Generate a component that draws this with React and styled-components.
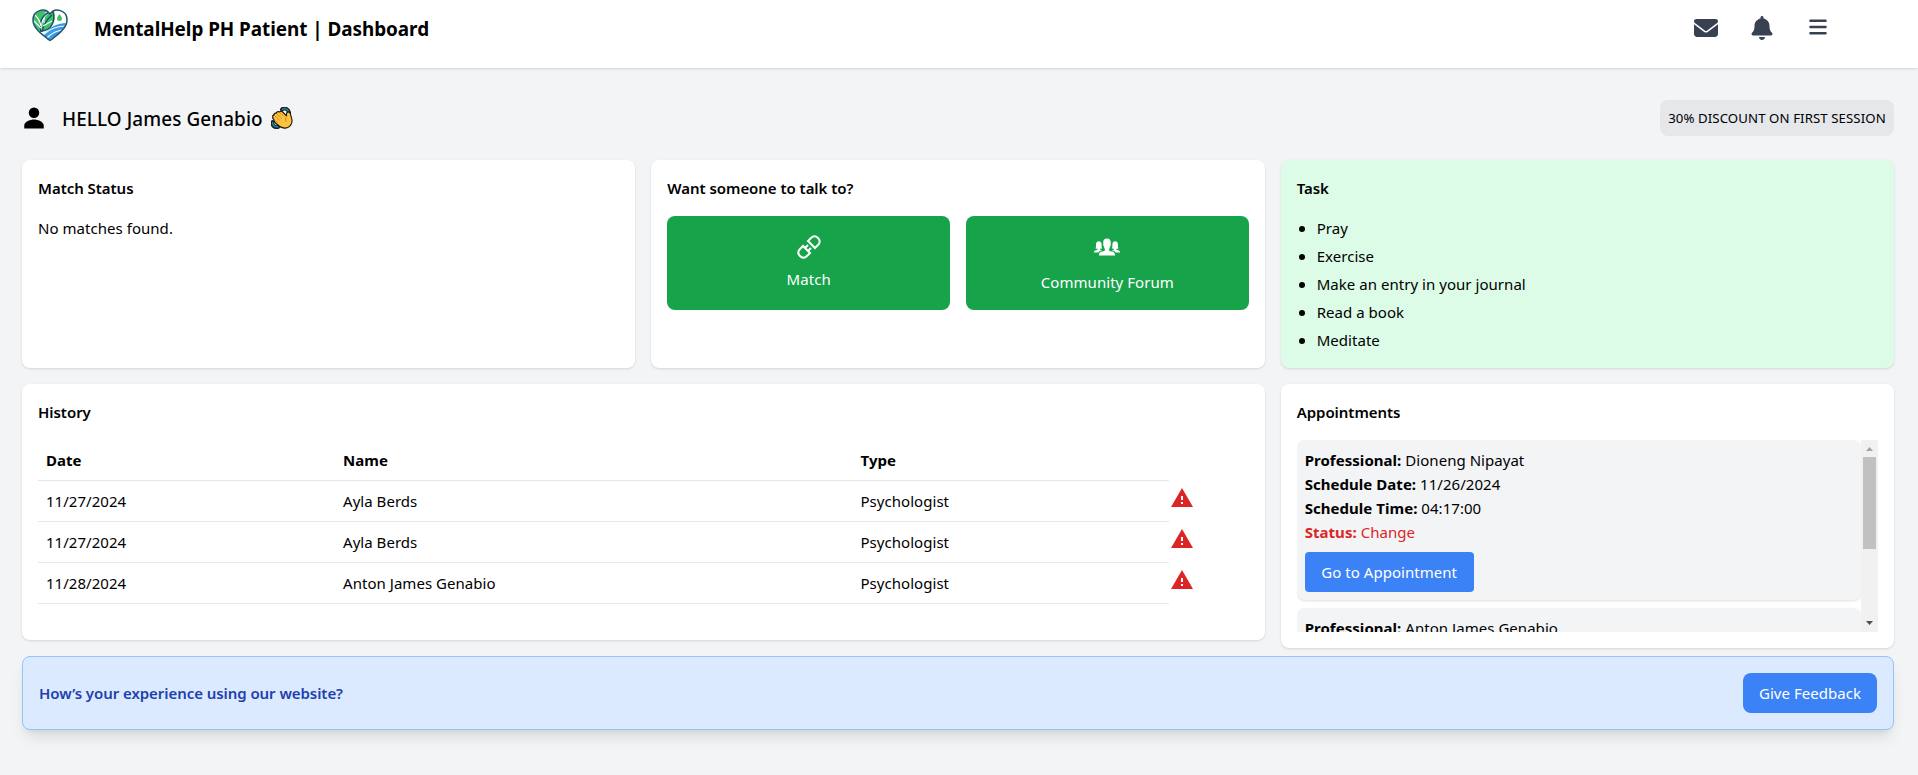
import React from "react";
import { GrConnect } from "react-icons/gr";
import { IoIosPeople } from "react-icons/io";
import { IoPersonSharp } from "react-icons/io5";
import { FaEnvelope, FaBell, FaBars } from "react-icons/fa6";
import { MdWarning } from "react-icons/md";
import styled, { createGlobalStyle } from "styled-components";

const GlobalStyle = createGlobalStyle`
  *, *::before, *::after { box-sizing: border-box; }
  body {
    margin: 0;
    background: #f3f4f6;
    color: #000;
    font-family: "Noto Sans", "Open Sans", sans-serif;
    font-size: 15px;
    line-height: 24px;
    letter-spacing: 0.04px;
  }
  h1, h2, p, ul { margin: 0; padding: 0; }
  svg { display: block; flex-shrink: 0; }
`;

const Page = styled.div`
  min-height: 775px;
  overflow: hidden;
`;

const Header = styled.header`
  display: flex;
  align-items: center;
  height: 68px;
  padding: 0 80px 12px 32px;
  background: #fff;
  box-shadow: 0 1px 3px rgba(0, 0, 0, 0.1), 0 1px 2px -1px rgba(0, 0, 0, 0.1);
`;

const Brand = styled.div`
  display: flex;
  align-items: center;
  gap: 26px;
  margin-right: auto;

  svg { margin-bottom: 5px; }
`;

const BrandTitle = styled.h1`
  padding-top: 2px;
  font-size: 18.9px;
  font-weight: 700;
  line-height: 28px;
  letter-spacing: -0.05px;
`;

const HeaderActions = styled.nav`
  display: flex;
  align-items: center;
  gap: 16px;
  color: #374151;
`;

const IconButton = styled.button`
  display: flex;
  align-items: center;
  justify-content: center;
  width: 40px;
  height: 40px;
  padding: 0 0 ${(p) => p.$lift || 0}px;
  border: 0;
  background: none;
  color: inherit;
`;

const Main = styled.main`
  padding: 32px 24px 0 22px;
`;

const Greeting = styled.div`
  display: flex;
  align-items: center;
  height: 36px;
  margin-bottom: 24px;
`;

const GreetingTitle = styled.h2`
  margin: 0 8px 0 16px;
  padding-top: 2px;
  font-size: 18.9px;
  font-weight: 500;
  line-height: 28px;
  letter-spacing: 0.1px;
`;

const Discount = styled.span`
  width: 234px;
  margin-left: auto;
  padding: 8px 0;
  border-radius: 8px;
  background: #e5e7eb;
  font-size: 13.2px;
  line-height: 20px;
  letter-spacing: 0.1px;
  text-align: center;
  white-space: nowrap;
`;

const Grid = styled.div`
  display: grid;
  grid-template-columns: repeat(3, minmax(0, 1fr));
  align-items: start;
  gap: 16px;
`;

const Card = styled.section`
  grid-column: span ${(p) => p.$span || 1};
  height: ${(p) => p.$height}px;
  padding: 16px;
  border-radius: 8px;
  background: ${(p) => p.$background || "#fff"};
  box-shadow: 0 1px 3px rgba(0, 0, 0, 0.1), 0 1px 2px -1px rgba(0, 0, 0, 0.1);
`;

const CardTitle = styled.h2`
  margin-bottom: 16px;
  font-size: 15px;
  font-weight: 600;
  line-height: 24px;
  letter-spacing: -0.04px;
`;

const TalkActions = styled.div`
  display: grid;
  grid-template-columns: 1fr 1fr;
  gap: 16px;
`;

const TalkButton = styled.button`
  display: flex;
  flex-direction: column;
  align-items: center;
  justify-content: center;
  gap: 8px;
  height: 94px;
  padding: 0;
  border: 0;
  border-radius: 8px;
  background: #16a34a;
  color: #fff;
  font: inherit;
  letter-spacing: inherit;
`;

const ConnectIcon = styled(GrConnect)`
  path { stroke: #fff; }
`;

const TaskList = styled.ul`
  display: flex;
  flex-direction: column;
  gap: 4px;
  list-style: none;
`;

const TaskItem = styled.li`
  display: flex;
  align-items: center;

  &::before {
    content: "";
    width: 6px;
    height: 6px;
    margin: 2px 12px 0 2px;
    border-radius: 50%;
    background: #000;
  }
`;

const HistoryTable = styled.table`
  width: 100%;
  table-layout: fixed;
  border-collapse: separate;
  border-spacing: 0;
`;

const Column = styled.col`
  width: ${(p) => p.$width}px;
`;

const Th = styled.th`
  height: 41px;
  padding: 8px;
  border-bottom: 1px solid #e5e7eb;
  font-weight: 700;
  text-align: left;
`;

const Td = styled.td`
  height: 41px;
  padding: 8px;
  border-bottom: 1px solid #e5e7eb;
`;

const AlertCell = styled.td`
  padding: 0 1px 7px;
  color: #dc2626;
  vertical-align: middle;
`;

const ScrollArea = styled.div`
  display: flex;
  height: 192px;
`;

const ScrollContent = styled.div`
  flex: 1;
  display: flex;
  flex-direction: column;
  gap: 8px;
  overflow: hidden;
`;

const Appointment = styled.article`
  flex-shrink: 0;
  height: 160px;
  padding: 8px;
  border-radius: 8px;
  background: #f3f4f6;
  box-shadow: 0 1px 3px rgba(0, 0, 0, 0.1), 0 1px 2px -1px rgba(0, 0, 0, 0.1);
`;

const Detail = styled.p`
  color: ${(p) => (p.$alert ? "#dc2626" : "inherit")};
`;

const Scrollbar = styled.div`
  display: flex;
  flex-direction: column;
  align-items: center;
  width: 17px;
  background: #f1f1f1;
`;

const ScrollArrow = styled.svg.attrs({ width: 17, height: 17, viewBox: "0 0 17 17" })`
  fill: ${(p) => p.$color};
`;

const ScrollThumb = styled.div`
  width: 13px;
  height: 92px;
  margin-bottom: auto;
  background: #c1c1c1;
`;

const BlueButton = styled.button`
  width: ${(p) => p.$width}px;
  height: 40px;
  margin-top: ${(p) => p.$top || 0}px;
  padding: 0;
  border: 0;
  border-radius: ${(p) => p.$radius}px;
  background: #3b82f6;
  color: #fff;
  font: inherit;
  letter-spacing: inherit;
`;

const FeedbackBanner = styled.aside`
  display: flex;
  align-items: center;
  justify-content: space-between;
  height: 74px;
  margin-top: 8px;
  padding: 0 16px;
  border: 1px solid #93c5fd;
  border-radius: 8px;
  background: #dbeafe;
  box-shadow: 0 10px 15px -3px rgba(0, 0, 0, 0.1), 0 4px 6px -4px rgba(0, 0, 0, 0.1);
`;

const FeedbackText = styled.p`
  color: #1e40af;
  font-weight: 600;
  letter-spacing: -0.06px;
`;

function Logo() {
  return (
    <svg width="36" height="33" viewBox="0 0 36 33" fill="none">
      <defs>
        <clipPath id="heart">
          <path d="M18 32C12 27 1 20 1 11 1 1 13-2 18 5 23-2 35 1 35 11 35 20 24 27 18 32Z" />
        </clipPath>
      </defs>
      <g clipPath="url(#heart)">
        <path d="M0 0H36V33H0Z" fill="#fff" />
        <path d="M0 0H17C11 5 7 12 9 23L0 17Z" fill="#3fc16c" />
        <path d="M10 22C9 11 14 4 22 2 24 12 20 20 10 22Z" fill="#3fc16c" />
        <path d="M11 27C17 17 26 14 36 14V24L18 33Z" fill="#3b9ae6" />
        <path d="M11 26C18 19 26 17 35 17M14 30C20 23 26 21 33 21M17 33C22 27 26 25 31 25" stroke="#e8f6ff" strokeWidth="1.2" />
        <path d="M9 23C7 13 10 6 18 3M10 22C19 21 24 13 21 2M10 23C11 17 14 11 20 6" stroke="#1c5362" strokeWidth="1.5" />
        <path d="M3 6C6 9 8 12 9 17M2 12L9 19M11 17L20 12M12 14V9" stroke="#fff" strokeWidth="1.1" />
      </g>
      <path d="M27.5 5C26 7 25 8.4 25 9.6A2.5 2.5 0 0 0 30 9.6C30 8.4 29 7 27.5 5Z" fill="#3fc16c" />
      <path d="M18 31.5C12 27 1 20 1 11 1 1 13-2 18 5 23-2 35 1 35 11 35 20 24 27 18 31.5Z" stroke="#20566c" strokeWidth="1.5" />
    </svg>
  );
}

function WavingHand() {
  return (
    <svg width="22" height="22" viewBox="0 0 22 22" fill="none">
      <path d="M11 2.500C12.500 .8 17 1 18 5.500M1.700 15C.5 18 3.500 20.800 7 20" stroke="#15232b" strokeWidth="4" strokeLinecap="round" />
      <path d="M11.500 2.300C13.500 1 16.500 1.800 17.500 4.500M1.600 15.500C1.500 18.500 4 20.300 7 19.800" stroke="#2d8ba0" strokeWidth="1.400" strokeLinecap="round" />
      <path
        d="M2 10.200C1 9 2 7.800 3.200 8.300 2.600 6.800 4 5.600 5.400 6.400 5.300 4.700 7.200 4 8.500 5.200 9.300 4 10.600 4 11.700 5L15.500 8.800C15.300 6.500 15.800 5 17.300 4.900 19 4.800 19.500 6.200 19.700 7.900 20 10 21.500 12 21 15 20.300 19 17 21.400 13.300 21.100 10 20.800 7.500 18.800 5 16.500 3.500 15 2.600 14 3.200 12.900L2 11.700C1.500 11.200 1.500 10.600 2 10.200Z"
        fill="#fdc23e" stroke="#17130a" strokeWidth="1.100" strokeLinejoin="round"
      />
      <path d="M3.500 8.500L8.500 13M5.600 6.600L10.500 11.200M8.700 5.400L12.500 9.200M3.500 13L6.500 15.500M15.700 9.500C14.200 11 14 12.800 15 14.500" stroke="#c9831f" strokeWidth=".8" strokeLinecap="round" />
    </svg>
  );
}

const tasks = ["Pray", "Exercise", "Make an entry in your journal", "Read a book", "Meditate"];

const history = [
  { date: "11/27/2024", name: "Ayla Berds", type: "Psychologist" },
  { date: "11/27/2024", name: "Ayla Berds", type: "Psychologist" },
  { date: "11/28/2024", name: "Anton James Genabio", type: "Psychologist" },
];

export default function App() {
  return (
    <Page>
      <GlobalStyle />
      <Header>
        <Brand>
          <Logo />
          <BrandTitle>MentalHelp PH Patient | Dashboard</BrandTitle>
        </Brand>
        <HeaderActions>
          <IconButton aria-label="Messages"><FaEnvelope size={24} /></IconButton>
          <IconButton aria-label="Notifications"><FaBell size={24} /></IconButton>
          <IconButton aria-label="Menu" $lift={2}><FaBars size={20} /></IconButton>
        </HeaderActions>
      </Header>

      <Main>
        <Greeting>
          <IoPersonSharp size={24} />
          <GreetingTitle>HELLO James Genabio</GreetingTitle>
          <WavingHand />
          <Discount>30% DISCOUNT ON FIRST SESSION</Discount>
        </Greeting>

        <Grid>
          <Card $height={208}>
            <CardTitle>Match Status</CardTitle>
            <p>No matches found.</p>
          </Card>

          <Card $height={208}>
            <CardTitle>Want someone to talk to?</CardTitle>
            <TalkActions>
              <TalkButton><ConnectIcon size={24} />Match</TalkButton>
              <TalkButton><IoIosPeople size={30} />Community Forum</TalkButton>
            </TalkActions>
          </Card>

          <Card $height={208} $background="#dcfce7">
            <CardTitle>Task</CardTitle>
            <TaskList>
              {tasks.map((task) => <TaskItem key={task}>{task}</TaskItem>)}
            </TaskList>
          </Card>

          <Card $height={256} $span={2}>
            <CardTitle>History</CardTitle>
            <HistoryTable>
              <colgroup>
                <Column $width={297} />
                <Column $width={517.5} />
                <Column $width={316.5} />
                <Column $width={80} />
              </colgroup>
              <thead>
                <tr><Th>Date</Th><Th>Name</Th><Th>Type</Th></tr>
              </thead>
              <tbody>
                {history.map((row, i) => (
                  <tr key={i}>
                    <Td>{row.date}</Td>
                    <Td>{row.name}</Td>
                    <Td>{row.type}</Td>
                    <AlertCell><MdWarning size={24} /></AlertCell>
                  </tr>
                ))}
              </tbody>
            </HistoryTable>
          </Card>

          <Card $height={264}>
            <CardTitle>Appointments</CardTitle>
            <ScrollArea>
              <ScrollContent>
                <Appointment>
                  <Detail><strong>Professional:</strong> Dioneng Nipayat</Detail>
                  <Detail><strong>Schedule Date:</strong> 11/26/2024</Detail>
                  <Detail><strong>Schedule Time:</strong> 04:17:00</Detail>
                  <Detail $alert><strong>Status:</strong> Change</Detail>
                  <BlueButton $width={169} $top={8} $radius={4}>Go to Appointment</BlueButton>
                </Appointment>
                <Appointment>
                  <Detail><strong>Professional:</strong> Anton James Genabio</Detail>
                </Appointment>
              </ScrollContent>
              <Scrollbar>
                <ScrollArrow $color="#a3a3a3"><path d="M5 11L8.5 7L12 11Z" /></ScrollArrow>
                <ScrollThumb />
                <ScrollArrow $color="#505050"><path d="M5 6L8.5 10L12 6Z" /></ScrollArrow>
              </Scrollbar>
            </ScrollArea>
          </Card>
        </Grid>

        <FeedbackBanner>
          <FeedbackText>How’s your experience using our website?</FeedbackText>
          <BlueButton $width={134} $radius={8}>Give Feedback</BlueButton>
        </FeedbackBanner>
      </Main>
    </Page>
  );
}
